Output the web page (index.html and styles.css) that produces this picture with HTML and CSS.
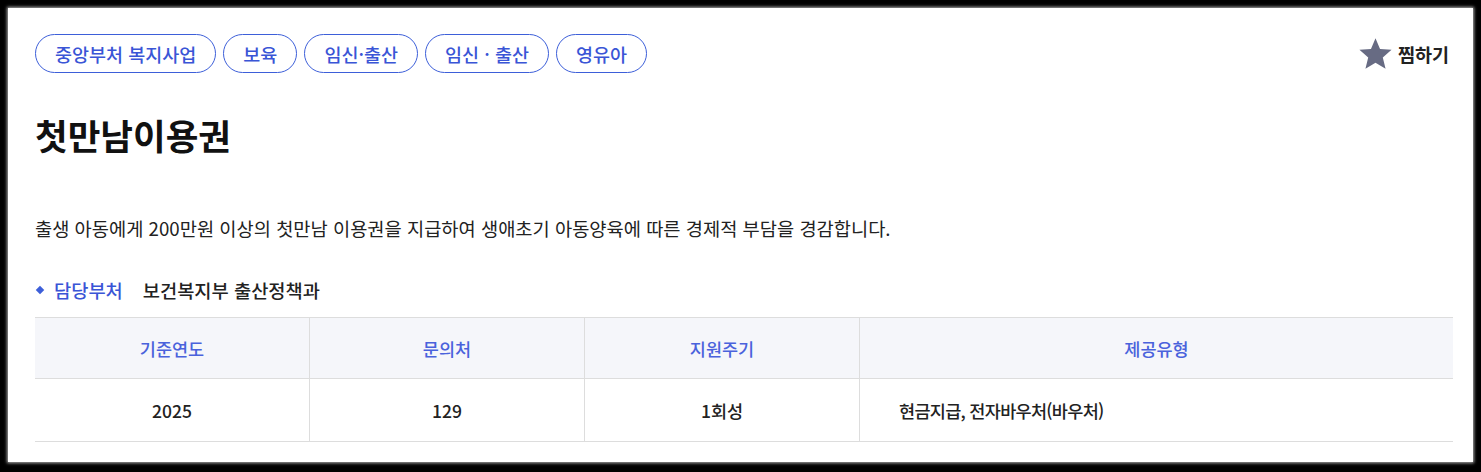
FILE: index.html
```html
<!DOCTYPE html>
<html lang="ko">
<head>
<meta charset="utf-8">
<link rel="stylesheet" href="styles.css">
</head>
<body>
<div class="card">
  <div class="top">
    <div class="tags">
      <span class="tag">중앙부처 복지사업</span>
      <span class="tag">보육</span>
      <span class="tag">임신·출산</span>
      <span class="tag">임신 · 출산</span>
      <span class="tag">영유아</span>
    </div>
    <div class="fav">
      <svg class="star" viewBox="0 0 24 24" width="35" height="35"><path d="M12 1.6l3.1 7.3 7.9.6-6 5.2 1.9 7.7L12 18.3l-6.9 4.1 1.9-7.7-6-5.2 7.9-.6z" fill="#676b83"/></svg>
      <span>찜하기</span>
    </div>
  </div>
  <h1 class="title">첫만남이용권</h1>
  <p class="desc">출생 아동에게 200만원 이상의 첫만남 이용권을 지급하여 생애초기 아동양육에 따른 경제적 부담을 경감합니다.</p>
  <div class="dept">
    <span class="bullet"></span>
    <span class="dept-label">담당부처</span>
    <span class="dept-name">보건복지부 출산정책과</span>
  </div>
  <table class="info">
    <thead>
      <tr><th class="c1">기준연도</th><th class="c2">문의처</th><th class="c3">지원주기</th><th>제공유형</th></tr>
    </thead>
    <tbody>
      <tr><td>2025</td><td>129</td><td>1회성</td><td class="left">현금지급, 전자바우처(바우처)</td></tr>
    </tbody>
  </table>
</div>
</body>
</html>
```
FILE: styles.css
```css
html, body {
  margin: 0;
  padding: 0;
  background: #000;
}
body {
  padding: 8px 8px 10px 8px;
  font-family: "Noto Sans CJK KR", "Noto Sans", sans-serif;
  color: #222;
}
.card {
  background: #fff;
  height: 454px;
  box-sizing: border-box;
  padding: 26px 24px 0 27px;
  box-shadow: 0 0 3px 1px rgba(255,255,255,0.7);
}
.top {
  display: flex;
  justify-content: space-between;
  align-items: center;
}
.tags {
  display: flex;
  gap: 7px;
}
.tag {
  display: inline-flex;
  align-items: center;
  height: 39px;
  box-sizing: border-box;
  padding: 0 19px;
  border: 1px solid #3d5fd9;
  border-radius: 20px;
  color: #3a55d6;
  font-size: 18.5px;
  font-weight: 500;
}
.fav {
  display: flex;
  align-items: center;
  gap: 5px;
  font-size: 18.5px;
  font-weight: 700;
  color: #222;
}
.star {
  display: block;
}
.title {
  margin: 37px 0 0 0;
  font-size: 35.5px;
  line-height: 50px;
  font-weight: 700;
  color: #111;
}
.desc {
  margin: 55px 0 0 0;
  font-size: 18.7px;
  line-height: 26px;
  color: #222;
}
.dept {
  display: flex;
  align-items: center;
  margin-top: 37px;
  font-size: 18.7px;
  line-height: 24px;
}
.bullet {
  width: 6px;
  height: 6px;
  background: #3d5fd9;
  transform: rotate(45deg);
  margin: 0 11px 0 2px;
}
.dept-label {
  color: #3a55d6;
  font-weight: 500;
  margin-right: 20px;
}
.dept-name {
  font-weight: 500;
  color: #222;
}
.info {
  width: 1418px;
  margin-top: 15px;
  border-collapse: collapse;
  table-layout: fixed;
  font-size: 17.5px;
}
.info th, .info td {
  padding: 0;
  border-top: 1px solid #ddd;
  border-bottom: 1px solid #ddd;
  border-left: 1px solid #ddd;
  text-align: center;
}
.info th:first-child, .info td:first-child {
  border-left: none;
}
.info th {
  height: 60px;
  background: #f5f6fa;
  color: #4a62dc;
  font-weight: 500;
}
.info td {
  height: 62px;
  color: #222;
  font-weight: 500;
}
.info td.left {
  text-align: left;
  padding-left: 39px;
  letter-spacing: -0.7px;
}
.c1 { width: 274px; }
.c2 { width: 274px; }
.c3 { width: 274px; }
```
